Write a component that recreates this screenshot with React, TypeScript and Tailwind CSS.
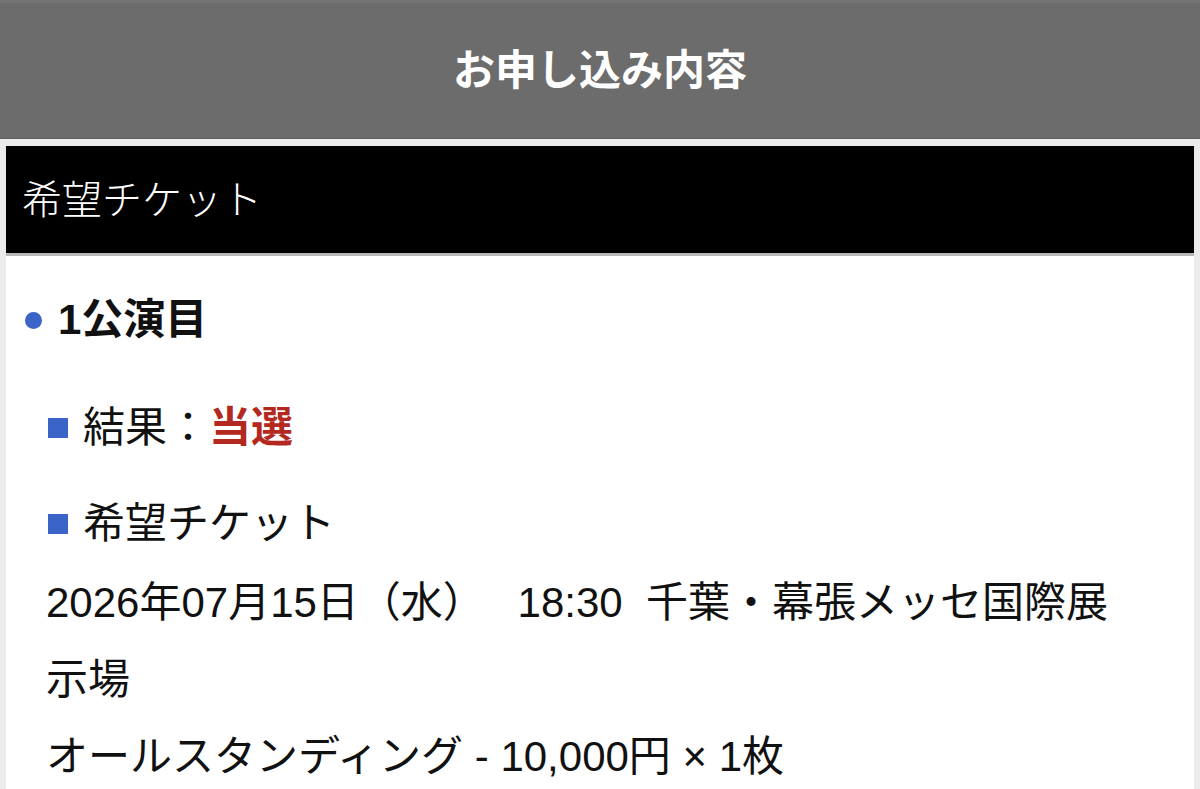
import React from 'react'

const font = { fontFamily: '"Liberation Sans", "Noto Sans CJK JP", sans-serif' }

const App = () => {
  return (
    <div className="min-h-[789px] bg-[#ebebeb] text-[#111]" style={font}>
      {/* page title */}
      <div className="h-[139px] bg-[#6c6c6c] border-t-[3px] border-[#747474] border-b border-b-[#5e5e5e] flex items-center justify-center">
        <h1 className="text-[42px] font-bold text-white leading-none">お申し込み内容</h1>
      </div>

      <div className="px-[6px] pt-[7px]">
        {/* section header */}
        <div className="h-[107px] bg-black flex items-center px-[16px]">
          <h2 className="text-[40px] font-light text-white leading-none">希望チケット</h2>
        </div>
        <div className="h-[3px] bg-[#b9b9b9]"></div>

        <div className="bg-white pt-[34px] pl-[19px] pr-[40px] pb-10">
          <div className="flex items-center leading-[60px]">
            <span className="w-[17px] h-[17px] rounded-full bg-[#3b64c8] mr-[16px]"></span>
            <span className="text-[42px] font-bold">1公演目</span>
          </div>

          <div className="pl-[23px]">
            <div className="flex items-center leading-[60px] mt-[48px]">
              <span className="w-[20px] h-[20px] bg-[#3b64c8] mr-[15px]"></span>
              <span className="text-[42px]">
                結果：<span className="font-bold text-[#b3281f]">当選</span>
              </span>
            </div>

            <div className="flex items-center leading-[60px] mt-[36px]">
              <span className="w-[20px] h-[20px] bg-[#3b64c8] mr-[15px]"></span>
              <span className="text-[42px]">希望チケット</span>
            </div>
          </div>

          <div className="pl-[21px] text-[42px] leading-[77px] mt-[10px] max-w-[1091px]">
            <p>2026年07月15日（水）　 18:30&nbsp;&nbsp;千葉・幕張メッセ国際展示場</p>
            <p>オールスタンディング - 10,000円 × 1枚</p>
          </div>
        </div>
      </div>
    </div>
  )
}

export default App
